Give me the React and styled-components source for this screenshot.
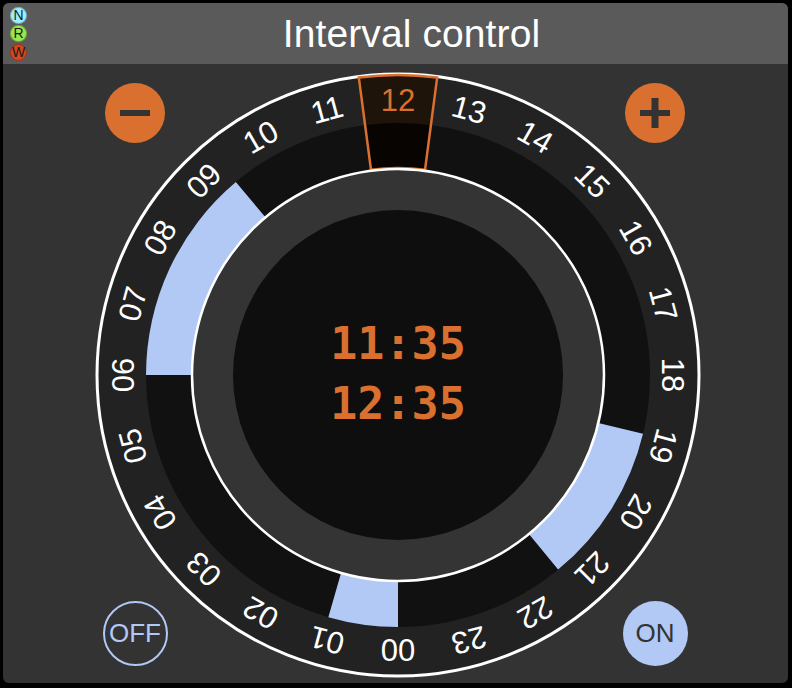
import React from "react";
import styled, { createGlobalStyle } from "styled-components";

const ORANGE = "#da7030";
const BLUE = "#b2c8f5";

const GlobalStyle = createGlobalStyle`
  html, body {
    margin: 0;
    padding: 0;
    background: #000;
  }
  body {
    width: 792px;
    height: 688px;
    overflow: hidden;
    font-family: "Liberation Sans", Arial, sans-serif;
  }
`;

const Window = styled.div`
  margin: 3px 4px 5px 3px;
  height: 680px;
  border-radius: 6px;
  overflow: hidden;
  background: #333;
  display: flex;
  flex-direction: column;
`;

const TitleBar = styled.div`
  height: 61px;
  flex-shrink: 0;
  background: #5a5a5a;
  display: flex;
  align-items: center;
`;

const Badges = styled.div`
  display: flex;
  flex-direction: column;
  gap: 1.5px;
  margin: 0 8px 0 7px;
`;

const Badge = styled.span`
  width: 17px;
  height: 17px;
  border-radius: 50%;
  background: ${(p) => p.$color};
  box-shadow: inset 0 0 0 1px rgba(0, 0, 0, 0.25);
  color: #1a1a1a;
  font-size: 14px;
  line-height: 17px;
  text-align: center;
`;

const Title = styled.h1`
  flex: 1;
  margin: 0;
  color: #fff;
  font-weight: 400;
  font-size: 39px;
  text-align: center;
  letter-spacing: 0.1px;
`;

const Body = styled.div`
  flex: 1;
  position: relative;
  display: flex;
  justify-content: center;
  overflow: hidden;
`;

const Dial = styled.svg`
  flex-shrink: 0;
  margin: 5px 0 0 4px;
  display: block;
`;

const Controls = styled.div`
  position: absolute;
  inset: 0;
  display: grid;
  grid-template-columns: 66px 66px;
  grid-template-rows: 66px 66px;
  justify-content: space-between;
  align-content: space-between;
  justify-items: center;
  align-items: center;
  padding: 16px 100px 17px 99px;
  pointer-events: none;
`;

const RoundButton = styled.button`
  pointer-events: auto;
  width: ${(p) => p.$size}px;
  height: ${(p) => p.$size}px;
  border-radius: 50%;
  padding: 0;
  display: flex;
  align-items: center;
  justify-content: center;
  font-family: "Liberation Sans", Arial, sans-serif;
  font-size: 26px;
  background: ${(p) => (p.$outline ? "transparent" : p.$color)};
  border: ${(p) => (p.$outline ? `2.5px solid ${p.$color}` : "none")};
  color: ${(p) => (p.$outline ? p.$color : "#333")};
  cursor: pointer;
`;

const polar = (r, deg) => {
  const a = ((deg - 90) * Math.PI) / 180;
  return [r * Math.cos(a), r * Math.sin(a)];
};

function sector(r0, r1, a0, a1) {
  const [x0, y0] = polar(r1, a0);
  const [x1, y1] = polar(r1, a1);
  const [x2, y2] = polar(r0, a1);
  const [x3, y3] = polar(r0, a0);
  const large = a1 - a0 > 180 ? 1 : 0;
  return `M${x0} ${y0} A${r1} ${r1} 0 ${large} 1 ${x1} ${y1} L${x2} ${y2} A${r0} ${r0} 0 ${large} 0 ${x3} ${y3} Z`;
}

const hourDeg = (h) => (h - 12) * 15;

// on-intervals, in hours
const intervals = [
  [6.0, 9.33],
  [18.9, 21.37],
  [24.0, 25.07],
];

const R_OUT = 301;
const R_BAND = 252;
const R_IN = 206;
const R_FACE = 165;

function Clock() {
  const hours = Array.from({ length: 24 }, (_, i) => i);
  return (
    <Dial width="612" height="612" viewBox="-306 -306 612 612">
      <circle r={R_OUT} fill="#222" stroke="#fff" strokeWidth="3" />
      <circle r={R_BAND} fill="#111" />
      {intervals.map(([a, b]) => (
        <path key={a} d={sector(R_IN, R_BAND, hourDeg(a), hourDeg(b))} fill={BLUE} />
      ))}
      <path d={sector(R_BAND, R_OUT - 1, -7.5, 7.5)} fill="#1f1409" />
      <path d={sector(R_IN, R_BAND, -7.5, 7.5)} fill="#070402" />
      <path
        d={sector(R_IN + 1, R_OUT - 1, -7.5, 7.5)}
        fill="none"
        stroke={ORANGE}
        strokeWidth="2.5"
        strokeLinejoin="miter"
      />
      <circle r={R_IN} fill="#343434" stroke="#fff" strokeWidth="2.5" />
      <circle r={R_FACE} fill="#0e0e0e" />
      {hours.map((h) => (
        <text
          key={h}
          transform={`rotate(${hourDeg(h)})`}
          x="0"
          y="-264"
          textAnchor="middle"
          fontFamily="'Liberation Sans', Arial, sans-serif"
          fontSize="31"
          fill={h === 12 ? ORANGE : "#fff"}
        >
          {String(h).padStart(2, "0")}
        </text>
      ))}
      <g
        fontFamily="'DejaVu Sans Mono', monospace"
        fontWeight="bold"
        fontSize="45"
        fill={ORANGE}
        textAnchor="middle"
      >
        <text x="0" y="-16">11:35</text>
        <text x="0" y="44">12:35</text>
      </g>
    </Dial>
  );
}

export default function App() {
  return (
    <>
      <GlobalStyle />
      <Window>
        <TitleBar>
          <Badges>
            <Badge $color="#9defff">N</Badge>
            <Badge $color="#9ae94c">R</Badge>
            <Badge $color="#d4481f">W</Badge>
          </Badges>
          <Title>Interval control</Title>
        </TitleBar>
        <Body>
          <Clock />
          <Controls>
            <RoundButton $size={60} $color={ORANGE} aria-label="decrease">
              <svg width="30" height="30" viewBox="0 0 30 30">
                <rect x="0" y="12" width="30" height="6" fill="#333" />
              </svg>
            </RoundButton>
            <RoundButton $size={60} $color={ORANGE} aria-label="increase">
              <svg width="30" height="30" viewBox="0 0 30 30">
                <rect x="0" y="12" width="30" height="6" fill="#333" />
                <rect x="11.5" y="0" width="7" height="30" fill="#333" />
              </svg>
            </RoundButton>
            <RoundButton $size={65} $color={BLUE} $outline>
              OFF
            </RoundButton>
            <RoundButton $size={65} $color={BLUE}>
              ON
            </RoundButton>
          </Controls>
        </Body>
      </Window>
    </>
  );
}
